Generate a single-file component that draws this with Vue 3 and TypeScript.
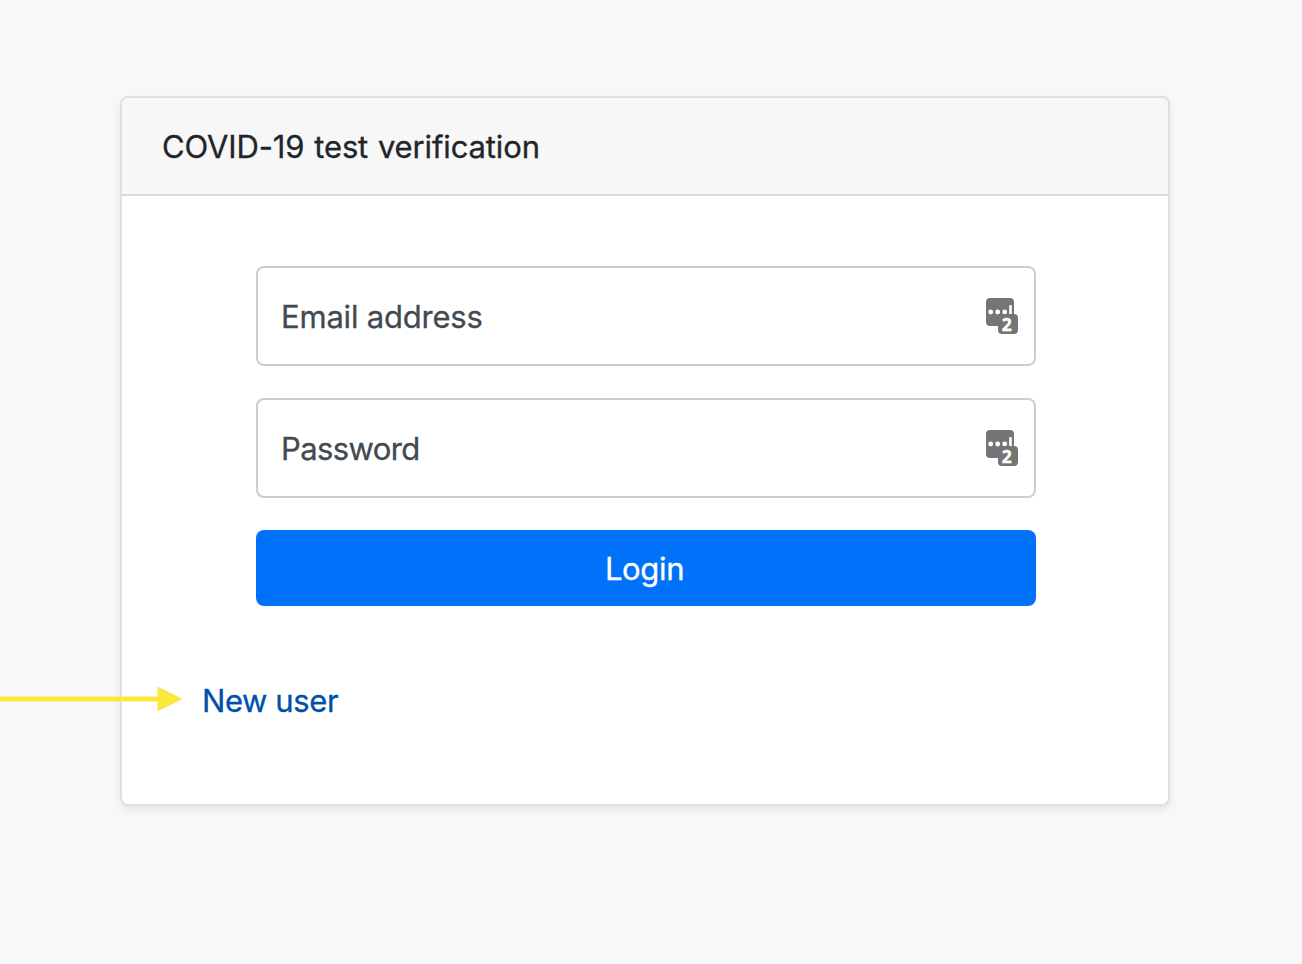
<script setup lang="ts">
interface Field {
  id: string
  label: string
}

const fields: Field[] = [
  { id: 'email', label: 'Email address' },
  { id: 'password', label: 'Password' },
]
</script>

<template>
  <main class="page">
    <section class="card">
      <header class="card-header">
        <span class="text title">COVID-19 test verification</span>
      </header>
      <div class="card-body">
        <form class="form" @submit.prevent>
          <label v-for="field in fields" :key="field.id" class="field">
            <span class="text" :class="field.id">{{ field.label }}</span>
            <svg class="manager" viewBox="0 0 32 36" width="32" height="36">
              <rect width="28" height="28" rx="4" fill="#757575" />
              <circle cx="4.7" cy="14" r="2.4" fill="#fff" />
              <circle cx="11.7" cy="14" r="2.4" fill="#fff" />
              <circle cx="18.7" cy="14" r="2.4" fill="#fff" />
              <rect x="23.2" y="7" width="2.6" height="10" rx="1" fill="#fff" />
              <rect x="12" y="16" width="20" height="20" rx="4" fill="#757575" />
              <text x="20.8" y="33" text-anchor="middle" class="count">2</text>
            </svg>
          </label>
          <button class="login" type="submit"><span class="text login-text">Login</span></button>
        </form>
        <a class="new-user"><span class="text new-text">New user</span></a>
      </div>
    </section>
    <svg class="arrow" viewBox="0 0 184 28" width="184" height="28">
      <rect y="11.5" width="160" height="5" fill="#fae93c" />
      <path d="M157.5 1.5 182.5 14 157.5 26.5Z" fill="#fae93c" />
    </svg>
  </main>
</template>

<style>
body {
  margin: 0;
  background: #f7f8fa;
}
</style>

<style scoped>
.page {
  position: relative;
  box-sizing: border-box;
  height: 964px;
  padding: 96px 132px 0 120px;
  overflow: hidden;
  background: #f7f8fa;
  color: #212529;
  font-family: Inter, "Liberation Sans", sans-serif;
  font-size: 31px;
  line-height: 48px;
}

.text {
  display: inline-block;
  white-space: nowrap;
  transform: translateY(1px);
  -webkit-text-stroke: 0.3px currentColor;
}

.title {
  letter-spacing: -0.13px;
  word-spacing: 1.2px;
}

.email {
  letter-spacing: -0.2px;
}

.password {
  letter-spacing: -0.6px;
}

.login-text {
  margin-right: 3px;
  letter-spacing: -0.35px;
}

.new-text {
  letter-spacing: -0.4px;
}

.card {
  box-sizing: border-box;
  height: 710px;
  border: 2px solid #dfdfdf;
  border-radius: 8px;
  background: #fff;
  box-shadow: 0 4px 8px rgba(0, 0, 0, 0.075);
}

.card-header {
  height: 48px;
  padding: 24px 40px;
  border-bottom: 2px solid #d9d9d9;
  border-radius: 6px 6px 0 0;
  background: #f7f7f7;
}

.card-body {
  padding: 70px 132px 0 134px;
}

.form {
  display: flex;
  flex-direction: column;
}

.field {
  display: flex;
  box-sizing: border-box;
  height: 100px;
  margin-bottom: 32px;
  padding: 0 16px 0 23px;
  align-items: center;
  justify-content: space-between;
  border: 2px solid #c8cfd5;
  border-radius: 8px;
  color: #424a50;
}

.manager {
  display: block;
  overflow: visible;
}

.count {
  fill: #fff;
  stroke: #fff;
  stroke-width: 0.4px;
  font: 700 17.5px/1 "Open Sans", sans-serif;
}

.login {
  height: 76px;
  padding: 0;
  border: 0;
  border-radius: 8px;
  background: #0072fa;
  color: #fff;
  font: inherit;
}

.new-user {
  display: block;
  margin: 70px 0 0 -54px;
  color: #004fa8;
}

.arrow {
  position: absolute;
  top: 685px;
  left: 0;
}
</style>
